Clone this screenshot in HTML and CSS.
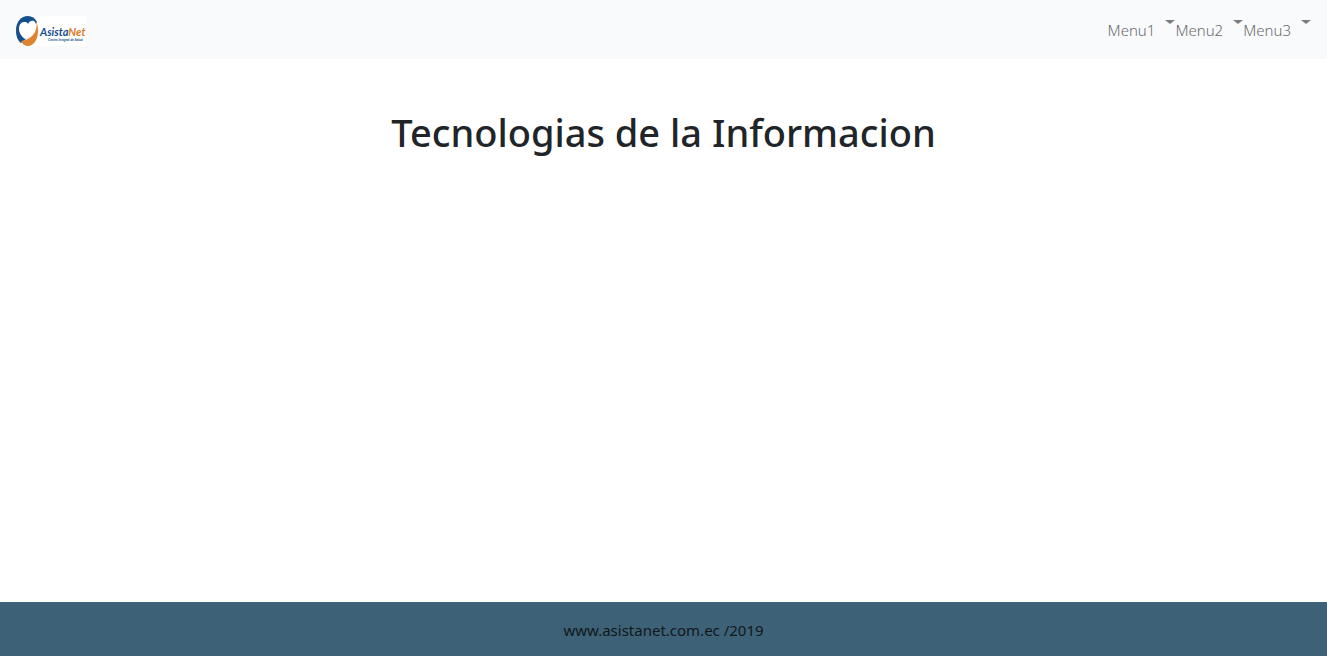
FILE: index.html
```html
<!DOCTYPE html>
<html lang="es">
<head>
<meta charset="utf-8">
<meta name="viewport" content="width=device-width, initial-scale=1">
<title>AsistaNet</title>
<link rel="stylesheet" href="styles.css">
</head>
<body class="page">
<header class="navbar">
  <a class="brand" href="#" aria-label="AsistaNet">
    <svg class="logo" viewBox="0 0 70 30" role="img" aria-hidden="true">
      <rect width="70" height="30" fill="#fff"/>
      <path d="M12 0C5 0 0 6 0 14c0 7 2 11 5 13l5-4 11-17C19 2 16 0 12 0z" fill="#15508c"/>
      <path d="M20 4c1 3 1 8-1 12-3 5-7 8-14 9 1 3 4 5 7 5 6 0 10-7 10-15 0-5-1-8-2-11z" fill="#e08330"/>
      <path d="M12 8c1-3 4-4 6-3 3 2 2 7 1 10-2 4-5 7-10 8-3-2-6-6-6-10 0-4 2-7 5-7 2 0 3 0 4 2z" fill="#fff"/>
      <text class="logo-name" x="24" y="20" fill="#174f8d">Asista<tspan fill="#e17a25">Net</tspan></text>
      <text class="logo-tagline" x="32" y="25" fill="#174f8d">Centro Integral de Salud</text>
    </svg>
  </a>
  <nav class="menu" aria-label="Principal">
    <button class="menu-item" type="button" aria-haspopup="true">Menu1<span class="caret"></span></button>
    <button class="menu-item" type="button" aria-haspopup="true">Menu2<span class="caret"></span></button>
    <button class="menu-item" type="button" aria-haspopup="true">Menu3<span class="caret"></span></button>
  </nav>
</header>
<main class="content">
  <h1 class="title">Tecnologias de la Informacion</h1>
</main>
<footer class="footer">www.asistanet.com.ec /2019</footer>
</body>
</html>
```
FILE: styles.css
```css
* {
  box-sizing: border-box;
}

.page {
  display: flex;
  flex-direction: column;
  min-height: 100vh;
  margin: 0;
  background: #fff;
  color: #212529;
  font-family: "Noto Sans", "Open Sans", sans-serif;
  font-size: 15px;
  line-height: 24px;
}

.navbar {
  display: flex;
  align-items: flex-start;
  justify-content: space-between;
  padding: 16px 16px 13px;
  background: #f8fafc;
}

.brand {
  display: block;
}

.logo {
  display: block;
  width: 70px;
  height: 30px;
}

.logo-name {
  font: italic bold 11px Lato, "Liberation Sans", sans-serif;
}

.logo-tagline {
  font: italic bold 3px "Liberation Sans", sans-serif;
}

.menu {
  display: flex;
}

.menu-item {
  display: flex;
  align-items: flex-start;
  gap: 10px;
  padding: 2px 0 0;
  border: 0;
  background: none;
  color: #6a6b6c;
  font: 300 15px/24px "Noto Sans", "Open Sans", sans-serif;
  cursor: pointer;
}

.caret {
  margin-top: 2px;
  border: 5px solid transparent;
  border-top: 4px solid #7b7c7d;
  border-bottom: 0;
}

.content {
  flex: 1;
  padding: 49px 16px;
  text-align: center;
}

.title {
  margin: 0;
  font-size: 38px;
  font-weight: 500;
  line-height: 48px;
}

.footer {
  padding: 16px 16px 14px;
  background: #3d6277;
  color: #111719;
  text-align: center;
}
```
